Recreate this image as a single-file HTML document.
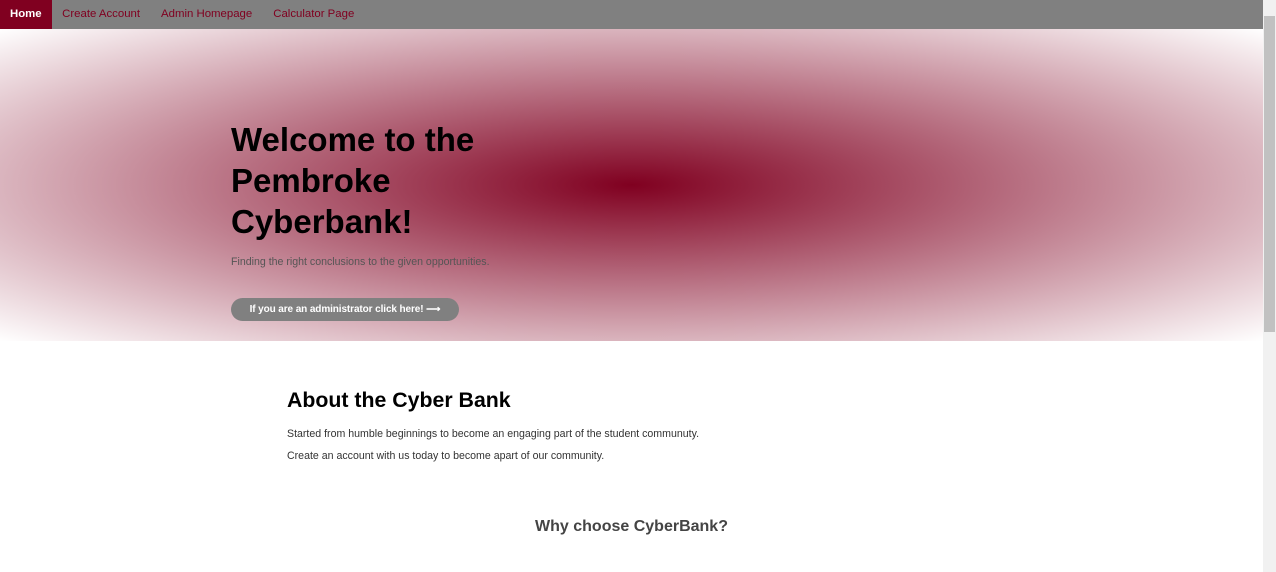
<!DOCTYPE html>
<html><head><style>
body{margin:0;font-family:"Liberation Sans",Arial,sans-serif;background:#fff;width:1276px;height:572px;overflow:hidden;position:relative}
.wrap{width:1263px}
nav{height:29px;background:#808080;display:flex}
nav a{font-size:11.4px;color:#800020;text-decoration:none;padding:0 10.5px;line-height:28px;white-space:nowrap}
nav a.on{background:#800020;color:#fff;font-weight:bold;padding:0 10px}
.hero{height:312px;background:radial-gradient(#800020,#fff);position:relative}
h1{position:absolute;left:231px;top:90px;margin:0;font-size:33px;line-height:41px;color:#000;font-weight:bold}
.sub{position:absolute;left:231px;top:227px;font-size:10.6px;color:#555;white-space:nowrap}
.btn{position:absolute;left:231px;top:269px;width:228px;height:23px;border-radius:12px;background:#808080;color:#fff;font-size:10px;font-weight:bold;text-align:center;line-height:23px;white-space:nowrap;letter-spacing:-0.1px}
h2{position:absolute;left:287px;top:388px;margin:0;font-size:21.3px;font-weight:bold}
p{position:absolute;left:287px;margin:0;font-size:10.6px;color:#333;white-space:nowrap}
h3{position:absolute;left:0;width:1263px;text-align:center;top:518px;margin:0;font-size:16px;color:#444;font-weight:bold}
.sb{position:absolute;right:0;top:0;width:13px;height:572px;background:#f1f1f1}
.th{position:absolute;right:1px;top:16px;width:11px;height:316px;background:#c1c1c1}
</style></head><body><div class="wrap">
<nav><a class="on">Home</a><a>Create Account</a><a>Admin Homepage</a><a>Calculator Page</a></nav>
<div class="hero"><h1>Welcome to the<br>Pembroke<br>Cyberbank!</h1>
<div class="sub">Finding the right conclusions to the given opportunities.</div>
<div class="btn">If you are an administrator click here! ⟶</div></div>
<h2>About the Cyber Bank</h2>
<p style="top:428px">Started from humble beginnings to become an engaging part of the student communuty.</p>
<p style="top:450px">Create an account with us today to become apart of our community.</p>
<h3>Why choose CyberBank?</h3>
</div><div class="sb"><div class="th"></div></div></body></html>
